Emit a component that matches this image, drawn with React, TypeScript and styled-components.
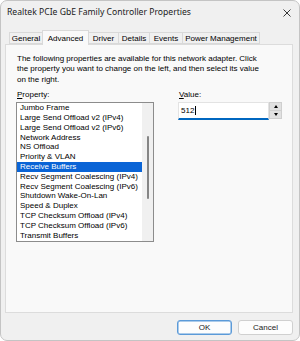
import React from "react";
import styled, { createGlobalStyle } from "styled-components";

// ______________________________________________________
// データ

const properties = [
  "Jumbo Frame",
  "Large Send Offload v2 (IPv4)",
  "Large Send Offload v2 (IPv6)",
  "Network Address",
  "NS Offload",
  "Priority & VLAN",
  "Receive Buffers",
  "Recv Segment Coalescing (IPv4)",
  "Recv Segment Coalescing (IPv6)",
  "Shutdown Wake-On-Lan",
  "Speed & Duplex",
  "TCP Checksum Offload (IPv4)",
  "TCP Checksum Offload (IPv6)",
  "Transmit Buffers",
];

const tabs = [
  { label: "General", width: 34 },
  { label: "Advanced", width: 47 },
  { label: "Driver", width: 31 },
  { label: "Details", width: 32 },
  { label: "Events", width: 34 },
  { label: "Power Management", width: 78 },
];

// ______________________________________________________
// スタイル

const GlobalStyle = createGlobalStyle`
  html, body {
    margin: 0;
    padding: 0;
    background: #ffffff;
  }
  body {
    font-family: "Liberation Sans", Arial, sans-serif;
    font-size: 8px;
    color: #000;
  }
`;

const Window = styled.div`
  box-sizing: border-box;
  width: 300px;
  height: 341px;
  display: flex;
  flex-direction: column;
  background: #f0f0f0;
  border: 1px solid #c4c4c4;
  border-radius: 7px;
  overflow: hidden;
`;

const TitleBar = styled.div`
  height: 28px;
  display: flex;
  align-items: flex-start;
  justify-content: space-between;
  padding: 6px 0 0 6px;
  box-sizing: border-box;
`;

const Title = styled.div`
  font-family: "Noto Sans", "Liberation Sans", sans-serif;
  font-size: 8.6px;
  line-height: 11px;
  color: #1a1a1a;
`;

const CloseButton = styled.div`
  width: 24px;
  height: 12px;
  display: flex;
  align-items: center;
  justify-content: center;
  margin-right: 0px;
`;

const TabRow = styled.div`
  display: flex;
  align-items: flex-end;
  height: 15px;
  padding-left: 8px;
  position: relative;
  z-index: 1;
`;

const Tab = styled.div<{ $active?: boolean; $w: number }>`
  box-sizing: border-box;
  width: ${(p) => p.$w}px;
  height: ${(p) => (p.$active ? 15 : 12)}px;
  margin-bottom: ${(p) => (p.$active ? -1 : 0)}px;
  display: flex;
  align-items: center;
  justify-content: center;
  padding-top: ${(p) => (p.$active ? 0 : 1)}px;
  background: ${(p) => (p.$active ? "#f9f9f9" : "#f0f0f0")};
  border: 1px solid #d9d9d9;
  border-bottom: ${(p) => (p.$active ? "none" : "1px solid #d9d9d9")};
  margin-right: -1px;
  white-space: nowrap;
  line-height: 9px;
`;

const Panel = styled.div`
  box-sizing: border-box;
  margin: 0 6px 0 4px;
  height: 269px;
  background: #f9f9f9;
  border: 1px solid #dcdcdc;
  padding: 9px 10px 0 11px;
`;

const Description = styled.p`
  margin: 0;
  line-height: 10.4px;
  white-space: nowrap;
`;

const Columns = styled.div`
  display: flex;
  margin-top: 5px;
`;

const PropertyColumn = styled.div`
  display: flex;
  flex-direction: column;
  width: 138px;
  margin-left: -1px;
`;

const ValueColumn = styled.div`
  display: flex;
  flex-direction: column;
  margin-left: 24px;
`;

const Label = styled.label`
  line-height: 10px;
  height: 12px;
  padding-left: 1px;
  & u {
    text-decoration: underline;
    text-underline-offset: 1px;
  }
`;

const ListBox = styled.div`
  box-sizing: border-box;
  height: 140px;
  border: 1px solid #8c8c8c;
  background: #ffffff;
  display: flex;
`;

const ListItems = styled.ul`
  list-style: none;
  margin: 0;
  padding: 0;
  flex: 1;
`;

const ListItem = styled.li<{ $selected?: boolean }>`
  height: 9.8px;
  line-height: 9.8px;
  padding-left: 3px;
  white-space: nowrap;
  background: ${(p) => (p.$selected ? "#0a64d6" : "transparent")};
  color: ${(p) => (p.$selected ? "#ffffff" : "#000000")};
`;

const ScrollTrack = styled.div`
  width: 11px;
  background: #f0f0f0;
  display: flex;
  justify-content: center;
`;

const ScrollThumb = styled.div`
  width: 2px;
  height: 63px;
  margin-top: 33px;
  border-radius: 1px;
  background: #858585;
`;

const ValueRow = styled.div`
  display: flex;
  height: 18px;
`;

const ValueInput = styled.div`
  box-sizing: border-box;
  width: 91px;
  height: 18px;
  background: #ffffff;
  border: 1px solid #e3e3e3;
  border-bottom: 2px solid #0067c0;
  display: flex;
  align-items: center;
  padding-left: 2px;
  padding-bottom: 1px;
`;

const Caret = styled.span`
  display: inline-block;
  width: 0;
  height: 9px;
  border-left: 1px solid #000;
  margin-left: 0.5px;
`;

const Spin = styled.div`
  box-sizing: border-box;
  width: 13px;
  height: 17px;
  display: flex;
  flex-direction: column;
  gap: 1px;
  padding: 1px;
  background: #cfcfcf;
`;

const SpinButton = styled.div<{ $down?: boolean }>`
  flex: 1;
  background: #e1e1e1;
  display: flex;
  align-items: center;
  justify-content: center;
  &::after {
    content: "";
    width: 0;
    height: 0;
    border-left: 2.5px solid transparent;
    border-right: 2.5px solid transparent;
    ${(p) =>
      p.$down ? "border-top: 3px solid #000;" : "border-bottom: 3px solid #000;"}
  }
`;

const Footer = styled.div`
  display: flex;
  justify-content: flex-end;
  gap: 6px;
  padding: 7px 6px 0 0;
`;

const Button = styled.div<{ $default?: boolean }>`
  box-sizing: border-box;
  width: 55px;
  height: 15px;
  display: flex;
  align-items: center;
  justify-content: center;
  background: #fdfdfd;
  border: 1px solid ${(p) => (p.$default ? "#5b9ad8" : "#d0d0d0")};
  box-shadow: ${(p) => (p.$default ? "inset 0 0 0 0.5px #5b9ad8" : "none")};
  border-radius: 3px;
  color: #1a1a1a;
`;

// ______________________________________________________
// コンポーネント

const App = () => {
  return (
    <>
      <GlobalStyle />
      <Window>
        <TitleBar>
          <Title>Realtek PCIe GbE Family Controller Properties</Title>
          <CloseButton>
            <svg width="8" height="8" viewBox="0 0 8 8">
              <path d="M0.5 0.5 L7.5 7.5 M7.5 0.5 L0.5 7.5" stroke="#222" strokeWidth="0.9" fill="none" />
            </svg>
          </CloseButton>
        </TitleBar>
        <TabRow>
          {tabs.map((t) => (
            <Tab key={t.label} $w={t.width} $active={t.label === "Advanced"}>
              {t.label}
            </Tab>
          ))}
        </TabRow>
        <Panel>
          <Description>
            The following properties are available for this network adapter. Click
            <br />
            the property you want to change on the left, and then select its value
            <br />
            on the right.
          </Description>
          <Columns>
            <PropertyColumn>
              <Label>
                <u>P</u>roperty:
              </Label>
              <ListBox>
                <ListItems>
                  {properties.map((p) => (
                    <ListItem key={p} $selected={p === "Receive Buffers"}>
                      {p}
                    </ListItem>
                  ))}
                </ListItems>
                <ScrollTrack>
                  <ScrollThumb />
                </ScrollTrack>
              </ListBox>
            </PropertyColumn>
            <ValueColumn>
              <Label>
                <u>V</u>alue:
              </Label>
              <ValueRow>
                <ValueInput>
                  512
                  <Caret />
                </ValueInput>
                <Spin>
                  <SpinButton />
                  <SpinButton $down />
                </Spin>
              </ValueRow>
            </ValueColumn>
          </Columns>
        </Panel>
        <Footer>
          <Button $default>OK</Button>
          <Button>Cancel</Button>
        </Footer>
      </Window>
    </>
  );
};

export default App;
